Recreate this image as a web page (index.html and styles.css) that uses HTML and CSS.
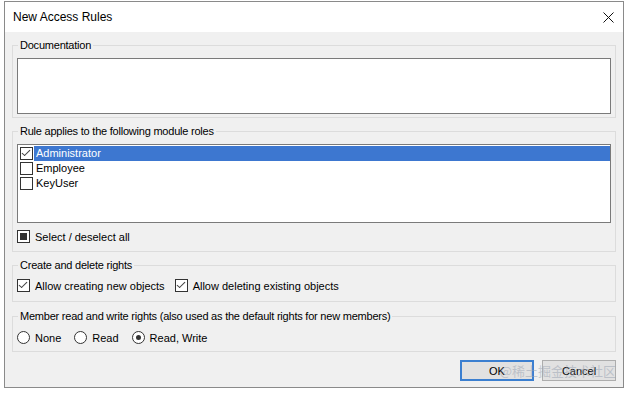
FILE: index.html
```html
<!DOCTYPE html>
<html lang="en">
<head>
    <meta charset="UTF-8">
    <title>New Access Rules</title>
    <link rel="stylesheet" href="styles.css">
</head>
<body>
    <div class="window">
        <div class="titlebar">
            <span class="title">New Access Rules</span>
            <svg class="close" width="11" height="11" viewBox="0 0 11 11">
                <path d="M0.5 0.5 L10.5 10.5 M10.5 0.5 L0.5 10.5" stroke="#111" stroke-width="1" fill="none"/>
            </svg>
        </div>

        <div class="content">
            <fieldset class="group group-doc">
                <legend>Documentation</legend>
                <textarea class="doc-input"></textarea>
            </fieldset>

            <fieldset class="group group-roles">
                <legend>Rule applies to the following module roles</legend>
                <div class="listbox">
                    <div class="list-row">
                        <span class="check checked"></span>
                        <span class="row-label selected">Administrator</span>
                    </div>
                    <div class="list-row">
                        <span class="check"></span>
                        <span class="row-label">Employee</span>
                    </div>
                    <div class="list-row">
                        <span class="check"></span>
                        <span class="row-label">KeyUser</span>
                    </div>
                </div>
                <div class="option-row select-all">
                    <span class="check mixed"></span>
                    <span class="option-label">Select / deselect all</span>
                </div>
            </fieldset>

            <fieldset class="group group-create">
                <legend>Create and delete rights</legend>
                <div class="option-row">
                    <span class="check checked"></span>
                    <span class="option-label">Allow creating new objects</span>
                    <span class="check checked"></span>
                    <span class="option-label">Allow deleting existing objects</span>
                </div>
            </fieldset>

            <fieldset class="group group-member">
                <legend>Member read and write rights (also used as the default rights for new members)</legend>
                <div class="option-row">
                    <span class="radio"></span>
                    <span class="option-label">None</span>
                    <span class="radio"></span>
                    <span class="option-label">Read</span>
                    <span class="radio on"></span>
                    <span class="option-label">Read, Write</span>
                </div>
            </fieldset>

            <div class="buttons">
                <button class="btn btn-default">OK</button>
                <button class="btn">Cancel</button>
                <span class="watermark">@稀土掘金技术社区</span>
            </div>
        </div>
    </div>
</body>
</html>
```

FILE: styles.css
```css
body {
    margin: 0;
    background: #fff;
    font-family: "Liberation Sans", Arial, sans-serif;
    font-size: 11px;
    color: #000;
}

.window {
    box-sizing: border-box;
    width: 620px;
    height: 387px;
    margin: 1px 0 0 4px;
    border: 1px solid #8a8a8a;
    background: #f0f0f0;
    display: flex;
    flex-direction: column;
}

.titlebar {
    height: 30px;
    background: #fff;
    display: flex;
    align-items: center;
    padding: 0 9px 0 8px;
}

.title {
    font-size: 12px;
    flex: 1;
}

.close {
    margin-top: 1px;
}

.content {
    flex: 1;
    padding: 7px 7px 0 7px;
    position: relative;
}

/* group boxes */
.group {
    margin: 0;
    padding: 0 4px 3px;
    border: 1px solid #dcdcdc;
    min-width: 0;
}

.group legend {
    margin-left: 1px;
    padding: 0 2px;
    line-height: 13px;
    height: 13px;
    letter-spacing: -0.22px;
}

.group-roles {
    margin-top: 7px;
    padding-bottom: 8px;
}

.group-create {
    margin-top: 7px;
    padding-bottom: 9px;
}

.group-member {
    margin-top: 8px;
    padding-bottom: 7px;
}

.doc-input {
    display: block;
    box-sizing: border-box;
    width: 100%;
    height: 56px;
    margin: 6px 0 0;
    border: 1px solid #7a7a7a;
    background: #fff;
    resize: none;
}

.listbox {
    box-sizing: border-box;
    height: 79px;
    margin-top: 6px;
    border: 1px solid #7a7a7a;
    background: #fff;
    padding: 1px 0 0 2px;
}

.list-row {
    display: flex;
    align-items: center;
    height: 15px;
}

.row-label {
    flex: 1;
    margin-left: 1px;
    padding-left: 2px;
    line-height: 15px;
}

.row-label.selected {
    background: #3d77d0;
    color: #fff;
}

/* checkboxes and radios */
.check {
    box-sizing: border-box;
    width: 13px;
    height: 13px;
    border: 1px solid #333;
    background: #fff;
    flex: none;
    position: relative;
}

.check.checked::after {
    content: "";
    position: absolute;
    left: 3px;
    top: 0;
    width: 3px;
    height: 7px;
    border-right: 1px solid #444;
    border-bottom: 1px solid #444;
    transform: rotate(40deg) skewX(-6deg);
}

.check.mixed::after {
    content: "";
    position: absolute;
    left: 2px;
    top: 2px;
    width: 7px;
    height: 7px;
    background: #333;
}

.radio {
    box-sizing: border-box;
    width: 13px;
    height: 13px;
    border: 1px solid #333;
    border-radius: 50%;
    background: #fff;
    flex: none;
    position: relative;
}

.radio.on::after {
    content: "";
    position: absolute;
    left: 3px;
    top: 3px;
    width: 5px;
    height: 5px;
    border-radius: 50%;
    background: #333;
}

.option-row {
    display: flex;
    align-items: center;
    height: 13px;
    margin-top: 7px;
}

.select-all {
    margin-top: 7px;
}

.group-member .option-row {
    margin-top: 8px;
}

.option-label {
    margin: 0 10px 0 5px;
}

.group-member .option-label {
    margin: 0 13px 0 5px;
}

/* buttons */
.buttons {
    display: flex;
    justify-content: flex-end;
    gap: 8px;
    margin-top: 8px;
    position: relative;
}

.btn {
    box-sizing: border-box;
    width: 74px;
    height: 21px;
    border: 1px solid #adadad;
    background: #e1e1e1;
    font-family: "Liberation Sans", Arial, sans-serif;
    font-size: 11px;
    color: #000;
    padding: 0;
}

.btn-default {
    border: 2px solid #3b7fd0;
}

.watermark {
    position: absolute;
    right: 0;
    top: 2px;
    font-family: "Noto Sans CJK SC", sans-serif;
    font-size: 13px;
    line-height: 18px;
    color: rgba(150, 160, 175, 0.5);
}
```
